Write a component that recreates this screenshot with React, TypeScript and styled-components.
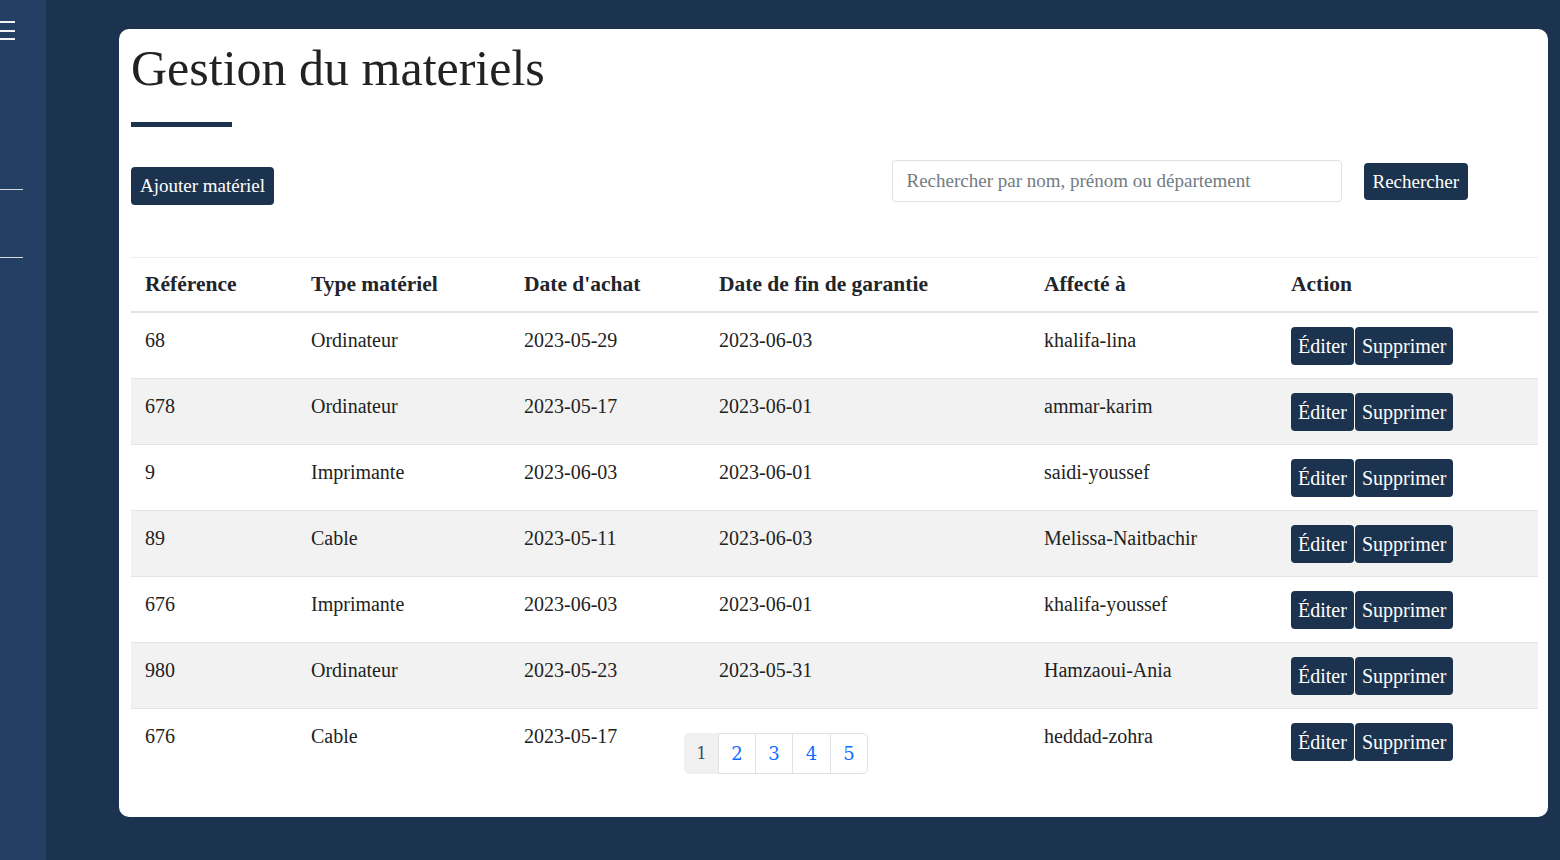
import React from "react";
import styled, { createGlobalStyle } from "styled-components";

const GlobalStyle = createGlobalStyle`
  html, body { margin: 0; padding: 0; }
  body {
    background: #1c3350;
    font-family: "Liberation Serif", "Times New Roman", serif;
    color: #212529;
  }
  * { box-sizing: border-box; }
`;

const Layout = styled.div`
  display: flex;
  width: 1560px;
  height: 860px;
  overflow: hidden;
`;

const Sidebar = styled.aside`
  width: 46px;
  flex: none;
  background: #233f64;
  display: flex;
  flex-direction: column;
  padding-top: 21px;
`;

const Burger = styled.div`
  width: 15px;
  height: 19px;
  display: flex;
  flex-direction: column;
  justify-content: space-between;
  span {
    display: block;
    height: 2px;
    background: #f4f4f4;
  }
`;

const SideRule = styled.hr<{ $top: number }>`
  width: 23px;
  margin: ${(p) => p.$top}px 0 0 0;
  border: none;
  border-top: 1px solid #d6d9de;
`;

const Main = styled.main`
  flex: 1;
  padding: 29px 12px 0 73px;
`;

const Card = styled.section`
  position: relative;
  background: #fff;
  border-radius: 10px;
  height: 788px;
  padding: 9px 10px 0 12px;
`;

const Title = styled.h1`
  margin: 0;
  font-weight: 400;
  font-size: 50px;
  line-height: 60px;
  color: #222;
`;

const TitleBar = styled.div`
  width: 101px;
  height: 5px;
  background: #1c3350;
  margin-top: 24px;
`;

const Toolbar = styled.div`
  display: flex;
  align-items: flex-start;
  justify-content: space-between;
  margin-top: 33px;
  padding-right: 70px;
`;

const DarkButton = styled.button<{ $size?: number; $pad?: number; $mt?: number }>`
  font-family: "Liberation Serif", "Times New Roman", serif;
  font-size: ${(p) => p.$size ?? 20}px;
  line-height: 28px;
  height: ${(p) => (p.$mt === 3 ? 37 : 38)}px;
  margin-top: ${(p) => p.$mt ?? 0}px;
  padding: 0 ${(p) => p.$pad ?? 7}px;
  background: #1c3350;
  color: #fff;
  border: none;
  border-radius: 4px;
  cursor: pointer;
  white-space: nowrap;
`;

const SearchGroup = styled.div`
  display: flex;
  align-items: flex-start;
  gap: 22px;
`;

const SearchInput = styled.input`
  width: 450px;
  height: 42px;
  border: 1px solid #dee2e6;
  border-radius: 4px;
  padding: 0 14px;
  font-family: "Liberation Serif", "Times New Roman", serif;
  font-size: 19px;
  color: #212529;
  &::placeholder { color: #737b83; }
`;

const TableWrap = styled.div`
  margin-top: 52px;
`;

const Table = styled.table`
  width: 1407px;
  border-collapse: collapse;
  table-layout: fixed;
`;

const Th = styled.th`
  text-align: left;
  font-size: 21.5px;
  font-weight: 700;
  line-height: 26px;
  padding: 13px 14px 14px;
  border-top: 1px solid #ececef;
  border-bottom: 2px solid #e2e2e8;
`;

const Row = styled.tr<{ $striped: boolean; $last?: boolean }>`
  background: ${(p) => (p.$striped ? "#f2f2f2" : "#fff")};
  border-bottom: ${(p) => (p.$last ? "none" : "1px solid #e4e4e8")};
`;

const Td = styled.td`
  vertical-align: top;
  font-size: 20px;
  line-height: 26px;
  padding: 14px 14px 12px;
  color: #222;
  white-space: nowrap;
`;

const ActionTd = styled(Td)`
  padding: 14px 14px 13px;
`;

const Actions = styled.div`
  display: flex;
  gap: 1px;
`;

const Pagination = styled.nav`
  position: absolute;
  left: 565px;
  top: 704px;
  display: flex;
  height: 41px;
`;

const PageItem = styled.span<{ $active?: boolean; $w: number }>`
  width: ${(p) => p.$w}px;
  display: flex;
  align-items: center;
  justify-content: center;
  font-size: 18px;
  font-family: "DejaVu Serif", serif;
  color: ${(p) => (p.$active ? "#3b4a6b" : "#0d6efd")};
  background: ${(p) => (p.$active ? "#f0f0f0" : "#fff")};
  border: 1px solid ${(p) => (p.$active ? "#f0f0f0" : "#dee2e6")};
  margin-left: -1px;
  &:first-child { border-radius: 5px 0 0 5px; margin-left: 0; font-size: 16px; }
  &:last-child { border-radius: 0 5px 5px 0; }
`;

const rows = [
  ["68", "Ordinateur", "2023-05-29", "2023-06-03", "khalifa-lina"],
  ["678", "Ordinateur", "2023-05-17", "2023-06-01", "ammar-karim"],
  ["9", "Imprimante", "2023-06-03", "2023-06-01", "saidi-youssef"],
  ["89", "Cable", "2023-05-11", "2023-06-03", "Melissa-Naitbachir"],
  ["676", "Imprimante", "2023-06-03", "2023-06-01", "khalifa-youssef"],
  ["980", "Ordinateur", "2023-05-23", "2023-05-31", "Hamzaoui-Ania"],
  ["676", "Cable", "2023-05-17", "", "heddad-zohra"],
];

const colWidths = [166, 213, 195, 325, 247, 261];
const headers = ["Référence", "Type matériel", "Date d'achat", "Date de fin de garantie", "Affecté à", "Action"];

export default function App() {
  return (
    <>
      <GlobalStyle />
      <Layout>
        <Sidebar>
          <Burger>
            <span />
            <span />
            <span />
          </Burger>
          <SideRule $top={149} />
          <SideRule $top={67} />
        </Sidebar>
        <Main>
          <Card>
            <Title>Gestion du materiels</Title>
            <TitleBar />
            <Toolbar>
              <DarkButton $size={19} $pad={9} $mt={7}>Ajouter matériel</DarkButton>
              <SearchGroup>
                <SearchInput placeholder="Rechercher par nom, prénom ou département" />
                <DarkButton $size={19} $pad={9} $mt={3}>Rechercher</DarkButton>
              </SearchGroup>
            </Toolbar>
            <TableWrap>
              <Table>
                <colgroup>
                  {colWidths.map((w, i) => (
                    <col key={i} style={{ width: w }} />
                  ))}
                </colgroup>
                <thead>
                  <tr>
                    {headers.map((h) => (
                      <Th key={h}>{h}</Th>
                    ))}
                  </tr>
                </thead>
                <tbody>
                  {rows.map((r, i) => (
                    <Row key={i} $striped={i % 2 === 1} $last={i === rows.length - 1}>
                      {r.map((c, j) => (
                        <Td key={j}>{c}</Td>
                      ))}
                      <ActionTd>
                        <Actions>
                          <DarkButton>Éditer</DarkButton>
                          <DarkButton>Supprimer</DarkButton>
                        </Actions>
                      </ActionTd>
                    </Row>
                  ))}
                </tbody>
              </Table>
            </TableWrap>
            <Pagination>
              <PageItem $active $w={35}>1</PageItem>
              <PageItem $w={38}>2</PageItem>
              <PageItem $w={38}>3</PageItem>
              <PageItem $w={39}>4</PageItem>
              <PageItem $w={38}>5</PageItem>
            </Pagination>
          </Card>
        </Main>
      </Layout>
    </>
  );
}
